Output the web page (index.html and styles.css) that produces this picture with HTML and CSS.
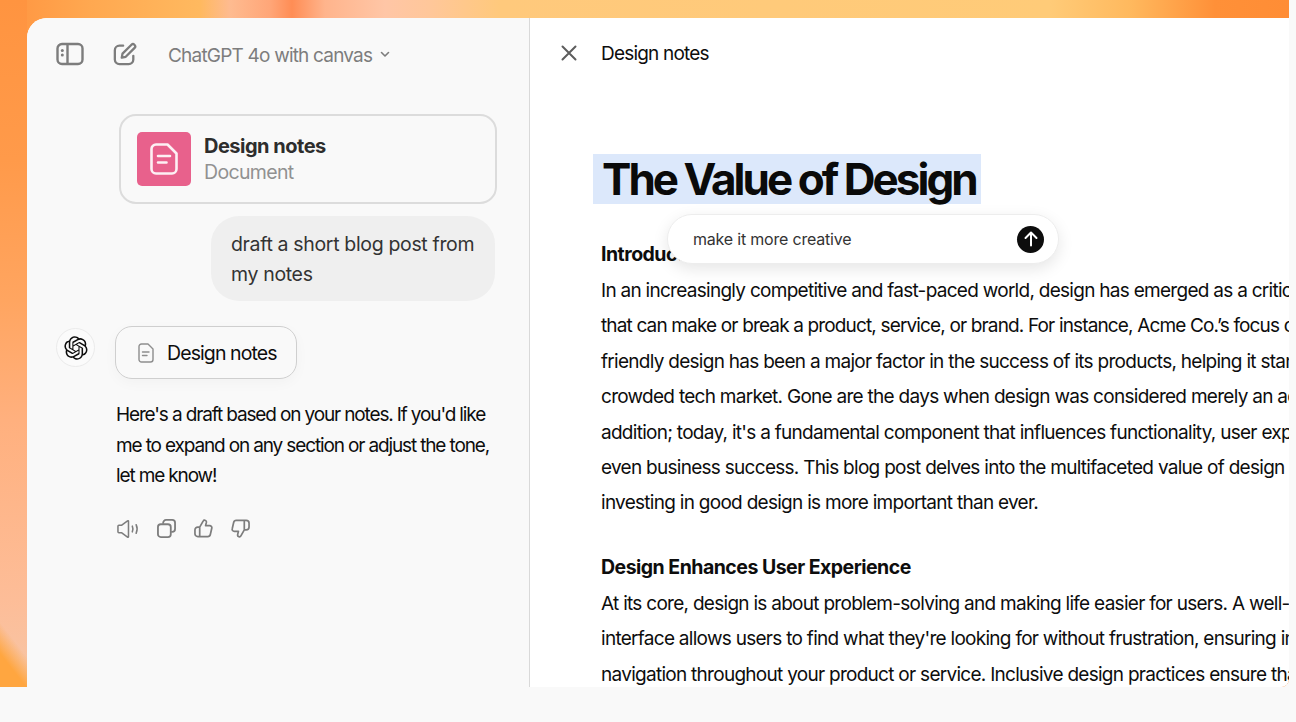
FILE: index.html
```html
<!DOCTYPE html>
<html>
    <head>
        <meta http-equiv="Content-Type" content="text/html;charset=UTF-8">
        <title>ChatGPT 4o with canvas</title>
        <link rel="stylesheet" href="styles.css">
    </head>
    <body>
        <div class="stage">
            <div class="window">

                <!-- chat column -->
                <section class="chat">
                    <header class="chat-bar">
                        <svg class="bar-icon" width="28" height="24" viewBox="0 0 28 24" fill="none" stroke="#7d7d7d" stroke-width="2.4">
                            <rect x="1.5" y="2" width="25" height="20" rx="4.5"/>
                            <path d="M11.5 2v20"/>
                            <circle cx="6.3" cy="8.6" r="1.5" fill="#7d7d7d" stroke="none"/>
                            <circle cx="6.3" cy="13" r="1.5" fill="#7d7d7d" stroke="none"/>
                        </svg>
                        <svg class="bar-icon" width="24" height="24" viewBox="0 0 26 26" fill="none" stroke="#7d7d7d" stroke-width="2.5" stroke-linecap="round" stroke-linejoin="round">
                            <path d="M11 4H7a5 5 0 0 0-5 5v10a5 5 0 0 0 5 5h10a5 5 0 0 0 5-5v-4"/>
                            <path d="M9.500 17l.8-4.400L20 3a2.300 2.300 0 0 1 3.200 0l.2.2a2.300 2.300 0 0 1 0 3.200L13.800 16z"/>
                        </svg>
                        <span class="model">ChatGPT 4o with canvas</span>
                        <svg width="10" height="7" viewBox="0 0 10 7" fill="none" stroke="#7d7d7d" stroke-width="1.6" stroke-linecap="round" stroke-linejoin="round">
                            <path d="M1.500 1.500L5 5l3.500-3.500"/>
                        </svg>
                    </header>

                    <div class="file-card">
                        <div class="file-thumb">
                            <svg width="28" height="32" viewBox="0 0 28 32" fill="none" stroke="#fdf0f4" stroke-width="2.600" stroke-linejoin="round" stroke-linecap="round">
                                <path d="M6 1.500h11.500l9 9V26a4.500 4.500 0 0 1-4.500 4.500H6A4.500 4.500 0 0 1 1.500 26V6A4.500 4.500 0 0 1 6 1.500z"/>
                                <path d="M8 13h12M8 19.500h8.500"/>
                            </svg>
                        </div>
                        <div>
                            <div class="file-name">Design notes</div>
                            <div class="file-kind">Document</div>
                        </div>
                    </div>

                    <div class="user-bubble">draft a short blog post from my notes</div>

                    <div class="reply">
                        <div class="avatar">
                            <svg width="24" height="24" viewBox="0 0 41 41" fill="#0d0d0d">
                                <path d="M37.5324 16.8707C37.9808 15.5241 38.1363 14.0974 37.9886 12.6859C37.8409 11.2744 37.3934 9.91076 36.676 8.68622C35.6126 6.83404 33.9882 5.3676 32.0373 4.4985C30.0864 3.62941 27.9098 3.40259 25.8215 3.85078C24.8796 2.7893 23.7219 1.94125 22.4257 1.36341C21.1295 0.785575 19.7249 0.491269 18.3058 0.500197C16.1708 0.495044 14.0893 1.16803 12.3614 2.42214C10.6335 3.67624 9.34853 5.44666 8.6917 7.47815C7.30085 7.76286 5.98686 8.3414 4.8377 9.17505C3.68854 10.0087 2.73073 11.0782 2.02839 12.312C0.956464 14.1591 0.498905 16.2988 0.721698 18.4228C0.944492 20.5467 1.83612 22.5449 3.268 24.1293C2.81966 25.4759 2.66413 26.9026 2.81182 28.3141C2.95951 29.7256 3.40701 31.0892 4.12437 32.3138C5.18791 34.1659 6.8123 35.6322 8.76321 36.5013C10.7141 37.3704 12.8907 37.5973 14.9789 37.1492C15.9208 38.2107 17.0786 39.0587 18.3747 39.6366C19.6709 40.2144 21.0755 40.5087 22.4946 40.4998C24.6307 40.5054 26.7133 39.8321 28.4418 38.5772C30.1704 37.3223 31.4556 35.5506 32.1119 33.5179C33.5027 33.2332 34.8167 32.6547 35.9659 31.821C37.115 30.9874 38.0728 29.9178 38.7752 28.684C39.8458 26.8371 40.3023 24.6979 40.0789 22.5748C39.8556 20.4517 38.9639 18.4544 37.5324 16.8707ZM22.4978 37.8849C20.7443 37.8874 19.0459 37.2733 17.6994 36.1501C17.7601 36.117 17.8666 36.0586 17.936 36.0161L25.9004 31.4156C26.1003 31.3019 26.2663 31.137 26.3813 30.9378C26.4964 30.7386 26.5563 30.5124 26.5549 30.2825V19.0542L29.9213 20.998C29.9389 21.0068 29.9541 21.0198 29.9656 21.0359C29.977 21.052 29.9842 21.0707 29.9867 21.0902V30.3889C29.9842 32.375 29.1946 34.2791 27.7909 35.6841C26.3872 37.0892 24.4838 37.8806 22.4978 37.8849ZM6.39227 31.0064C5.51397 29.4888 5.19742 27.7107 5.49804 25.9832C5.55718 26.0187 5.66048 26.0818 5.73461 26.1244L13.699 30.7248C13.8975 30.8408 14.1233 30.902 14.3532 30.902C14.583 30.902 14.8088 30.8408 15.0073 30.7248L24.731 25.1103V28.9979C24.7321 29.0177 24.7283 29.0376 24.7199 29.0556C24.7115 29.0736 24.6988 29.0893 24.6829 29.1012L16.6317 33.7497C14.9096 34.7416 12.8643 35.0097 10.9447 34.4954C9.02506 33.9811 7.38785 32.7263 6.39227 31.0064ZM4.29707 13.6194C5.17156 12.0998 6.55279 10.9364 8.19885 10.3327C8.19885 10.4013 8.19491 10.5228 8.19491 10.6071V19.808C8.19351 20.0378 8.25334 20.2638 8.36823 20.4629C8.48312 20.6619 8.64893 20.8267 8.84863 20.9404L18.5723 26.5542L15.206 28.4979C15.1894 28.5089 15.1703 28.5155 15.1505 28.5173C15.1307 28.5191 15.1107 28.516 15.0924 28.5082L7.04046 23.8557C5.32135 22.8601 4.06716 21.2235 3.55289 19.3046C3.03862 17.3858 3.30624 15.3413 4.29707 13.6194ZM31.955 20.0556L22.2312 14.4411L25.5976 12.4981C25.6142 12.4872 25.6333 12.4805 25.6531 12.4787C25.6729 12.4769 25.6928 12.4801 25.7111 12.4879L33.7631 17.1364C34.9967 17.849 36.0017 18.8982 36.6606 20.1613C37.3194 21.4244 37.6047 22.849 37.4832 24.2684C37.3617 25.6878 36.8382 27.0432 35.9743 28.1759C35.1103 29.3086 33.9415 30.1717 32.6047 30.6641C32.6047 30.5947 32.6047 30.4733 32.6047 30.3889V21.188C32.6066 20.9586 32.5474 20.7328 32.4332 20.5338C32.319 20.3348 32.154 20.1698 31.955 20.0556ZM35.3055 15.0128C35.2464 14.9765 35.1431 14.9142 35.069 14.8717L27.1045 10.2712C26.906 10.1554 26.6803 10.0943 26.4504 10.0943C26.2206 10.0943 25.9948 10.1554 25.7963 10.2712L16.0726 15.8858V11.9982C16.0715 11.9783 16.0753 11.9585 16.0837 11.9405C16.0921 11.9225 16.1048 11.9068 16.1207 11.8949L24.1719 7.25025C25.4053 6.53903 26.8158 6.19376 28.2383 6.25482C29.6608 6.31589 31.0364 6.78077 32.2044 7.59508C33.3723 8.40939 34.2842 9.53945 34.8334 10.8531C35.3826 12.1667 35.5464 13.6095 35.3055 15.0128ZM14.2424 21.9419L10.8752 19.9981C10.8576 19.9893 10.8423 19.9763 10.8309 19.9602C10.8195 19.9441 10.8122 19.9254 10.8098 19.9058V10.6071C10.8107 9.18295 11.2173 7.78848 11.9819 6.58696C12.7466 5.38544 13.8377 4.42659 15.1275 3.82264C16.4173 3.21869 17.8524 2.99464 19.2649 3.1767C20.6775 3.35876 22.0089 3.93941 23.1034 4.85067C23.0427 4.88379 22.937 4.94215 22.8668 4.98473L14.9024 9.58517C14.7025 9.69878 14.5366 9.86356 14.4215 10.0626C14.3065 10.2616 14.2466 10.4877 14.2479 10.7175L14.2424 21.9419ZM16.071 17.9991L20.4018 15.4978L24.7325 17.9975V22.9985L20.4018 25.4983L16.071 22.9985V17.9991Z"/>
                            </svg>
                        </div>
                        <div class="reply-body">
                            <div class="doc-chip">
                                <svg width="16" height="20" viewBox="0 0 16 20" fill="none" stroke="#8e8e8e" stroke-width="1.400" stroke-linejoin="round" stroke-linecap="round">
                                    <path d="M3.500 1h6.500l5 5v10.500a2.500 2.500 0 0 1-2.500 2.500h-9A2.500 2.500 0 0 1 1 16.500v-13A2.500 2.500 0 0 1 3.500 1z"/>
                                    <path d="M4.500 9h6.500M4.500 12.500h4.500"/>
                                </svg>
                                <span>Design notes</span>
                            </div>
                            <p class="reply-text">Here's a draft based on your notes. If you'd like me to expand on any section or adjust the tone, let me know!</p>
                            <div class="reply-actions">
                                <svg width="22" height="20" viewBox="0 0 23 20" fill="none" stroke="#7d7d7d" stroke-width="1.600" stroke-linecap="round" stroke-linejoin="round">
                                    <path d="M1 7v6a1 1 0 0 0 1 1h3l6 4.500a.6.6 0 0 0 1-.5V2a.6.6 0 0 0-1-.5L5 6H2a1 1 0 0 0-1 1z"/>
                                    <path d="M16 7c.8 1.800.8 4.200 0 6M20 5.500c1.300 2.800 1.300 6.200 0 9"/>
                                </svg>
                                <svg width="19" height="19" viewBox="0 0 20 20" fill="none" stroke="#7d7d7d" stroke-width="1.900" stroke-linejoin="round">
                                    <path d="M6.500 5V4a3 3 0 0 1 3-3H16a3 3 0 0 1 3 3v6.500a3 3 0 0 1-3 3h-1"/>
                                    <rect x="1" y="5.500" width="13.500" height="13.500" rx="3"/>
                                </svg>
                                <svg width="19" height="19" viewBox="0 0 20 20" fill="none" stroke="#7d7d7d" stroke-width="1.800" stroke-linecap="round" stroke-linejoin="round">
                                    <path d="M6 8.500l3.600-6.300c.4-.8 1.300-1.200 2.100-.9 1 .3 1.500 1.300 1.300 2.300L12.200 7h4.300c1.500 0 2.600 1.400 2.200 2.800l-1.500 6.500c-.3 1.300-1.400 2.200-2.700 2.200H4a3 3 0 0 1-3-3v-4a3 3 0 0 1 3-3h2v10"/>
                                </svg>
                                <svg width="19" height="19" viewBox="0 0 20 20" fill="none" stroke="#7d7d7d" stroke-width="1.800" stroke-linecap="round" stroke-linejoin="round">
                                    <path d="M14 11.500l-3.600 6.300c-.4.800-1.300 1.200-2.100.9-1-.3-1.500-1.300-1.300-2.300l.8-3.400H3.500c-1.500 0-2.600-1.400-2.200-2.800l1.500-6.500C3.100 2.400 4.200 1.500 5.500 1.500H16a3 3 0 0 1 3 3v4a3 3 0 0 1-3 3h-2v-10"/>
                                </svg>
                            </div>
                        </div>
                    </div>
                </section>

                <!-- canvas column -->
                <section class="canvas">
                    <header class="canvas-bar">
                        <svg width="16" height="16" viewBox="0 0 16 16" fill="none" stroke="#5d5d5d" stroke-width="2" stroke-linecap="round">
                            <path d="M1.500 1.500l13 13M14.500 1.500l-13 13"/>
                        </svg>
                        <span class="canvas-title">Design notes</span>
                    </header>

                    <div class="doc">
                        <h1 class="doc-title"><span>The Value of Design</span></h1>

                        <h2 class="doc-heading">Introduction</h2>
                        <p class="doc-line">In an increasingly competitive and fast-paced world, design has emerged as a critical factor</p>
                        <p class="doc-line doc-line-tight">that can make or break a product, service, or brand. For instance, Acme Co.’s focus on user-</p>
                        <p class="doc-line">friendly design has been a major factor in the success of its products, helping it stand out in a</p>
                        <p class="doc-line">crowded tech market. Gone are the days when design was considered merely an aesthetic</p>
                        <p class="doc-line">addition; today, it's a fundamental component that influences functionality, user experience, and</p>
                        <p class="doc-line">even business success. This blog post delves into the multifaceted value of design and why</p>
                        <p class="doc-line">investing in good design is more important than ever.</p>

                        <h2 class="doc-heading doc-heading-next">Design Enhances User Experience</h2>
                        <p class="doc-line">At its core, design is about problem-solving and making life easier for users. A well-designed</p>
                        <p class="doc-line">interface allows users to find what they're looking for without frustration, ensuring intuitive</p>
                        <p class="doc-line">navigation throughout your product or service. Inclusive design practices ensure that everyone</p>
                    </div>

                    <div class="prompt">
                        <span>make it more creative</span>
                        <div class="prompt-send">
                            <svg width="14" height="16" viewBox="0 0 14 16" fill="none" stroke="#fff" stroke-width="2" stroke-linecap="round" stroke-linejoin="round">
                                <path d="M7 14.500V1.500M1.500 7L7 1.500 12.500 7"/>
                            </svg>
                        </div>
                    </div>
                </section>

            </div>
        </div>
    </body>
</html>
```

FILE: styles.css
```css
html, body {
    margin: 0;
    background: #f9f9f9;
}
body {
    font-family: Inter, "Liberation Sans", sans-serif;
    color: #0d0d0d;
    height: 722px;
    overflow: hidden;
}
.stage {
    width: 1289px;
    height: 687px;
    box-sizing: border-box;
    padding: 18px 0 0 27px;
    overflow: hidden;
    border-bottom-right-radius: 8px;
    background:
        linear-gradient(52deg, #ffa640 0, #ffa640 32%, rgba(255, 166, 64, 0) 62%) left bottom / 27px 70px no-repeat,
        linear-gradient(to bottom, #ff9440 0, #ff9a4a 160px, #ffa560 300px, #ffb07e 420px, #fdbd98 600px, #f6c6a6 687px) left top / 27px 100% no-repeat,
        linear-gradient(to right, #ff9440 0, #ffa850 90px, #ffb95f 200px, #febb90 230px, #ffa678 270px, #ff8d55 292px, #ffb48c 325px, #ffc6a6 385px, #ffc79a 430px, #ffc97c 500px, #ffcb78 1050px, #ffb95e 1130px, #ff9038 1215px, #ff8d35 1289px);
}
.window {
    display: flex;
    height: 669px;
    border-radius: 20px 0 8px 0;
    overflow: hidden;
    background: #fff;
}

/* chat column */
.chat {
    width: 503px;
    flex: none;
    box-sizing: border-box;
    background: #f9f9f9;
    border-right: 1px solid #d9d9d9;
}
.chat-bar {
    display: flex;
    align-items: center;
    height: 72px;
    padding-left: 29px;
    color: #7d7d7d;
}
.bar-icon {
    margin-right: 29px;
}
.bar-icon + .bar-icon {
    margin-right: 31px;
}
.model {
    margin: 2px 8px 0 0;
    font-size: 19px;
    letter-spacing: -.8px;
}
.file-card {
    display: flex;
    align-items: center;
    gap: 13px;
    box-sizing: border-box;
    width: 378px;
    height: 90px;
    margin: 24px 0 0 92px;
    padding-left: 16px;
    border: 2px solid #dcdcdc;
    border-radius: 17px;
}
.file-thumb {
    display: flex;
    align-items: center;
    justify-content: center;
    width: 54px;
    height: 54px;
    border-radius: 5px;
    background: #e8618c;
}
.file-name {
    font-size: 20px;
    line-height: 26px;
    font-weight: 700;
    letter-spacing: -.5px;
    color: #2d2d2d;
}
.file-kind {
    font-size: 19.500px;
    line-height: 26px;
    letter-spacing: -.65px;
    color: #919191;
}
.user-bubble {
    box-sizing: border-box;
    width: 284px;
    height: 85px;
    margin: 12px 0 0 184px;
    padding: 13px 14px 13px 20px;
    border-radius: 28px;
    background: #efefef;
    font-size: 19.500px;
    line-height: 30px;
    letter-spacing: -.34px;
    color: #333;
}
.reply {
    display: flex;
    gap: 21px;
    margin: 25px 0 0 29px;
}
.avatar {
    display: flex;
    align-items: center;
    justify-content: center;
    box-sizing: border-box;
    width: 39px;
    height: 39px;
    margin-top: 2px;
    border: 1px solid #ebebeb;
    border-radius: 50%;
    background: #fbfbfb;
}
.reply-body {
    width: 390px;
    margin-left: -1px;
}
.doc-chip {
    display: inline-flex;
    align-items: center;
    gap: 13px;
    box-sizing: border-box;
    width: 182px;
    height: 53px;
    padding-left: 22px;
    border: 1.500px solid #cfcfcf;
    border-radius: 17px;
    box-shadow: 0 4px 14px rgba(0, 0, 0, .03);
    font-size: 19.500px;
    letter-spacing: -.9px;
}
.reply-text {
    margin: 21px 0 0 1px;
    font-size: 19px;
    line-height: 30.500px;
    letter-spacing: -1.14px;
}
.reply-actions {
    display: flex;
    align-items: center;
    gap: 18px;
    margin: 27px 0 0 2px;
}

/* canvas column */
.canvas {
    position: relative;
    flex: 1;
    min-width: 0;
    overflow: hidden;
    background: #fff;
}
.canvas-bar {
    display: flex;
    align-items: center;
    gap: 24px;
    height: 70px;
    padding: 0 0 2px 31px;
}
.canvas-title {
    font-size: 19px;
    letter-spacing: -.8px;
}
.doc {
    padding: 64px 0 0 71px;
}
.doc-title {
    margin: 0 0 0 -8px;
    font-size: 44px;
    line-height: 50px;
    font-weight: 700;
    letter-spacing: -2.950px;
    color: #0a0a0a;
}
.doc-title span {
    display: inline-block;
    padding: 0 5px 0 9px;
    background: #dce8fb;
}
.doc-heading {
    margin: 32px 0 0;
    font-size: 19.500px;
    line-height: 37px;
    font-weight: 700;
    letter-spacing: -.52px;
}
.doc-heading-next {
    margin-top: 28px;
}
.doc-line {
    margin: 0;
    font-size: 19px;
    line-height: 35.400px;
    letter-spacing: -.72px;
    white-space: nowrap;
}
.doc-line-tight {
    letter-spacing: -.85px;
}

/* floating prompt over the document */
.prompt {
    position: absolute;
    left: 137px;
    top: 196px;
    display: flex;
    align-items: center;
    justify-content: space-between;
    box-sizing: border-box;
    width: 392px;
    height: 50px;
    padding: 0 14px 0 25px;
    border-radius: 25px;
    background: #fff;
    border: 1px solid #ededed;
    box-shadow: 0 5px 16px rgba(0, 0, 0, .1);
    font-size: 16px;
    letter-spacing: -.2px;
    color: #333;
}
.prompt-send {
    display: flex;
    align-items: center;
    justify-content: center;
    width: 27px;
    height: 27px;
    border-radius: 50%;
    background: #0d0d0d;
}
```
